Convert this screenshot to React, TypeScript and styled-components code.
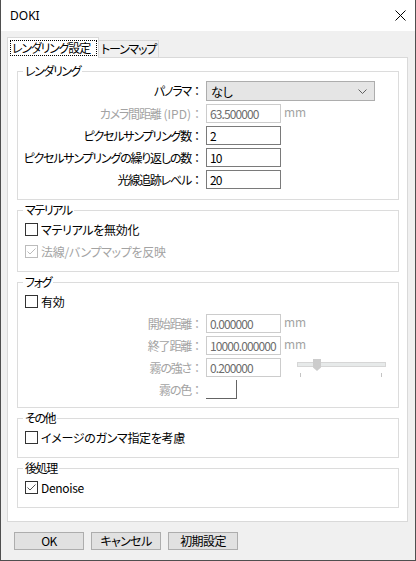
import styled, { createGlobalStyle } from 'styled-components';

const GlobalStyle = createGlobalStyle`
  html, body {
    margin: 0;
    padding: 0;
    background: #ffffff;
  }
  body {
    font-family: "Noto Sans CJK JP", "Noto Sans", sans-serif;
    font-size: 12px;
    font-feature-settings: "palt";
    color: #000;
  }
  * {
    box-sizing: border-box;
  }
`;

const Window = styled.div`
  width: 416px;
  height: 561px;
  display: flex;
  flex-direction: column;
  background: #f0f0f0;
  border: 1px solid #4f4f4f;
  border-top: none;
`;

const TitleBar = styled.div`
  height: 31px;
  flex: none;
  display: flex;
  align-items: center;
  justify-content: space-between;
  padding: 0 9px 0 9px;
  background: #ffffff;
`;

const Title = styled.span`
  font-family: "Noto Sans", "Liberation Sans", sans-serif;
  font-size: 12px;
  color: #000;
`;

const Body = styled.div`
  flex: 1;
  display: flex;
  flex-direction: column;
  padding: 6px 7px 0 6px;
`;

const TabStrip = styled.div`
  display: flex;
  align-items: flex-end;
  height: 20px;
`;

const Tab = styled.div<{ $active?: boolean; $width: number }>`
  width: ${({ $width }) => $width}px;
  height: ${({ $active }) => ($active ? '21px' : '17px')};
  margin-bottom: ${({ $active }) => ($active ? '-1px' : '0')};
  position: relative;
  z-index: ${({ $active }) => ($active ? 1 : 0)};
  background: ${({ $active }) => ($active ? '#ffffff' : '#f0f0f0')};
  border: 1px solid #d9d9d9;
  border-bottom: none;
  border-left: ${({ $active }) => ($active ? '1px solid #d9d9d9' : 'none')};
  padding: ${({ $active }) => ($active ? '2px 0 0 2px' : '0 0 0 2px')};
  line-height: 16px;
  letter-spacing: -1.2px;
  white-space: nowrap;
`;

const FocusRect = styled.span`
  display: inline-block;
  width: 87px;
  height: 16px;
  padding: 0 2px;
  outline: 1px dotted #000;
  outline-offset: -1px;
  line-height: 16px;
`;

const Panel = styled.div`
  background: #ffffff;
  border: 1px solid #d9d9d9;
  padding: 13px 8px 13px 9px;
  display: flex;
  flex-direction: column;
  gap: 10px;
`;

const GroupBox = styled.div`
  border: 1px solid #dcdcdc;
  display: flex;
  flex-direction: column;
`;

const Legend = styled.span`
  align-self: flex-start;
  margin: -8px 0 0 5px;
  padding: 0 2px;
  height: 14px;
  line-height: 14px;
  letter-spacing: -1.4px;
  background: #ffffff;
`;

const FormGrid = styled.div<{ $top: number; $bottom: number }>`
  display: grid;
  grid-template-columns: 185px 75px 1fr;
  column-gap: 3px;
  row-gap: 3px;
  padding: ${({ $top, $bottom }) => `${$top}px 0 ${$bottom}px 0`};
`;

const FieldLabel = styled.span<{ $disabled?: boolean }>`
  display: flex;
  justify-content: flex-end;
  white-space: nowrap;
  line-height: 19px;
  letter-spacing: -1.2px;
  color: ${({ $disabled }) => ($disabled ? '#a3a3a3' : '#000')};
`;

const Latin = styled.span`
  letter-spacing: 0;
  margin-left: 3px;
`;

const Colon = styled.span`
  width: 12px;
  letter-spacing: 0;
  font-feature-settings: normal;
`;

const Combo = styled.div`
  grid-column: 2 / span 2;
  width: 169px;
  height: 20px;
  display: flex;
  align-items: center;
  justify-content: space-between;
  padding: 0 7px 0 4px;
  background: #e5e5e5;
  border: 1px solid #adadad;
`;

const TextBox = styled.div<{ $disabled?: boolean }>`
  height: 19px;
  border: 1px solid ${({ $disabled }) => ($disabled ? '#cccccc' : '#7a7a7a')};
  padding-left: 3px;
  line-height: 17px;
  letter-spacing: -0.9px;
  white-space: nowrap;
  overflow: hidden;
  color: ${({ $disabled }) => ($disabled ? '#6d6d6d' : '#000')};
`;

const Unit = styled.span`
  line-height: 15px;
  color: #a3a3a3;
`;

const Swatch = styled.div`
  width: 31px;
  height: 19px;
  border-right: 1px solid #646464;
  border-bottom: 1px solid #646464;
`;

const Slider = styled.div`
  position: relative;
  width: 89px;
  height: 19px;
  margin-left: 13px;
`;

const Track = styled.div`
  margin-top: 4px;
  height: 5px;
  background: #e7eaea;
  border: 1px solid #d6d6d6;
`;

const Thumb = styled.div`
  position: absolute;
  left: 16px;
  top: 1px;
  width: 8px;
  height: 12px;
  background: #cccccc;
  clip-path: polygon(0 0, 100% 0, 100% 70%, 50% 100%, 0 70%);
`;

const Tick = styled.div<{ $left: number }>`
  position: absolute;
  left: ${({ $left }) => $left}px;
  top: 15px;
  width: 1px;
  height: 4px;
  background: #c4c4c4;
`;

const CheckList = styled.div<{ $bottom: number }>`
  display: flex;
  flex-direction: column;
  gap: 4px;
  padding: ${({ $bottom }) => `3px 0 ${$bottom}px 7px`};
`;

const CheckRow = styled.label<{ $disabled?: boolean }>`
  height: 18px;
  display: flex;
  align-items: center;
  gap: 3px;
  white-space: nowrap;
  letter-spacing: -0.3px;
  color: ${({ $disabled }) => ($disabled ? '#a3a3a3' : '#000')};
`;

const Box = styled.span<{ $disabled?: boolean }>`
  width: 13px;
  height: 13px;
  flex: none;
  display: flex;
  background: #ffffff;
  border: 1px solid ${({ $disabled }) => ($disabled ? '#bcbcbc' : '#333333')};
`;

const Footer = styled.div`
  display: flex;
  gap: 7px;
  padding: 10px 0 0 7px;
`;

const Button = styled.div`
  width: 70px;
  height: 18px;
  display: flex;
  align-items: center;
  justify-content: center;
  background: #e1e1e1;
  border: 1px solid #adadad;
  line-height: 16px;
  letter-spacing: -0.6px;
`;

const Checkbox = ({ checked, disabled }: { checked?: boolean; disabled?: boolean }) => (
  <Box $disabled={disabled}>
    {checked && (
      <svg width="11" height="11" viewBox="0 0 11 11">
        <polyline
          points="1.5,5.5 4,8 9.5,2.5"
          fill="none"
          stroke={disabled ? '#bcbcbc' : '#555555'}
          strokeWidth="1"
        />
      </svg>
    )}
  </Box>
);

const Check = ({
  label,
  checked,
  disabled,
}: {
  label: string;
  checked?: boolean;
  disabled?: boolean;
}) => (
  <CheckRow $disabled={disabled}>
    <Checkbox checked={checked} disabled={disabled} />
    {label}
  </CheckRow>
);

const Label = ({
  text,
  latin,
  disabled,
}: {
  text: string;
  latin?: string;
  disabled?: boolean;
}) => (
  <FieldLabel $disabled={disabled}>
    {text}
    {latin && <Latin>{latin}</Latin>}
    <Colon>：</Colon>
  </FieldLabel>
);

export default function App() {
  return (
    <>
      <GlobalStyle />
      <Window>
        <TitleBar>
          <Title>DOKI</Title>
          <svg width="11" height="11" viewBox="0 0 11 11">
            <path d="M0.5 0.5 L10.5 10.5 M10.5 0.5 L0.5 10.5" stroke="#000" strokeWidth="1" />
          </svg>
        </TitleBar>
        <Body>
          <TabStrip>
            <Tab $active $width={92}>
              <FocusRect>レンダリング設定</FocusRect>
            </Tab>
            <Tab $width={60}>トーンマップ</Tab>
          </TabStrip>
          <Panel>
            <GroupBox>
              <Legend>レンダリング</Legend>
              <FormGrid $top={3} $bottom={10}>
                <Label text="パノラマ" />
                <Combo>
                  なし
                  <svg width="9" height="5" viewBox="0 0 9 5">
                    <polyline points="0.5,0.5 4.5,4.5 8.5,0.5" fill="none" stroke="#606060" />
                  </svg>
                </Combo>
                <Label text="カメラ間距離" latin="(IPD)" disabled />
                <TextBox $disabled>63.500000</TextBox>
                <Unit>mm</Unit>
                <Label text="ピクセルサンプリング数" />
                <TextBox>2</TextBox>
                <span />
                <Label text="ピクセルサンプリングの繰り返しの数" />
                <TextBox>10</TextBox>
                <span />
                <Label text="光線追跡レベル" />
                <TextBox>20</TextBox>
                <span />
              </FormGrid>
            </GroupBox>

            <GroupBox>
              <Legend>マテリアル</Legend>
              <CheckList $bottom={11}>
                <Check label="マテリアルを無効化" />
                <Check label="法線/バンプマップを反映" checked disabled />
              </CheckList>
            </GroupBox>

            <GroupBox>
              <Legend>フォグ</Legend>
              <CheckList $bottom={0}>
                <Check label="有効" />
              </CheckList>
              <FormGrid $top={4} $bottom={8}>
                <Label text="開始距離" disabled />
                <TextBox $disabled>0.000000</TextBox>
                <Unit>mm</Unit>
                <Label text="終了距離" disabled />
                <TextBox $disabled>10000.000000</TextBox>
                <Unit>mm</Unit>
                <Label text="霧の強さ" disabled />
                <TextBox $disabled>0.200000</TextBox>
                <Slider>
                  <Track />
                  <Thumb />
                  <Tick $left={3} />
                  <Tick $left={84} />
                </Slider>
                <Label text="霧の色" disabled />
                <Swatch />
                <span />
              </FormGrid>
            </GroupBox>

            <GroupBox>
              <Legend>その他</Legend>
              <CheckList $bottom={11}>
                <Check label="イメージのガンマ指定を考慮" />
              </CheckList>
            </GroupBox>

            <GroupBox>
              <Legend>後処理</Legend>
              <CheckList $bottom={11}>
                <Check label="Denoise" checked />
              </CheckList>
            </GroupBox>
          </Panel>
          <Footer>
            <Button>OK</Button>
            <Button>キャンセル</Button>
            <Button>初期設定</Button>
          </Footer>
        </Body>
      </Window>
    </>
  );
}
